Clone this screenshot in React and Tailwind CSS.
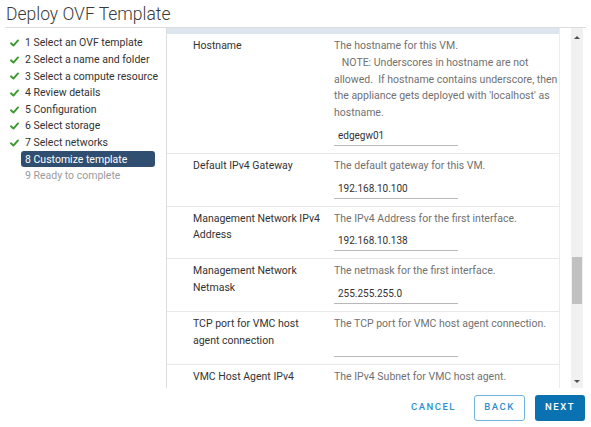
// Deploy OVF Template wizard — step 8 (Customize template)

const STEPS = [
  { n: 1, label: "Select an OVF template", done: true },
  { n: 2, label: "Select a name and folder", done: true },
  { n: 3, label: "Select a compute resource", done: true },
  { n: 4, label: "Review details", done: true },
  { n: 5, label: "Configuration", done: true },
  { n: 6, label: "Select storage", done: true },
  { n: 7, label: "Select networks", done: true },
  { n: 8, label: "Customize template", active: true },
  { n: 9, label: "Ready to complete", pending: true },
];

const FIELDS = [
  {
    label: "Hostname",
    desc: [
      "The hostname for this VM.",
      "   NOTE: Underscores in hostname are not",
      "allowed.  If hostname contains underscore, then",
      "the appliance gets deployed with 'localhost' as",
      "hostname.",
    ],
    value: "edgegw01",
  },
  {
    label: "Default IPv4 Gateway",
    desc: ["The default gateway for this VM."],
    value: "192.168.10.100",
  },
  {
    label: "Management Network IPv4 Address",
    desc: ["The IPv4 Address for the first interface."],
    value: "192.168.10.138",
  },
  {
    label: "Management Network Netmask",
    desc: ["The netmask for the first interface."],
    value: "255.255.255.0",
  },
  {
    label: "TCP port for VMC host agent connection",
    desc: ["The TCP port for VMC host agent connection."],
    value: "",
  },
  {
    label: "VMC Host Agent IPv4",
    desc: ["The IPv4 Subnet for VMC host agent."],
    value: "",
  },
];

const CheckMark = () => (
  <svg width="9" height="8" viewBox="0 0 9 8" fill="none">
    <path
      d="M1 4.3 L3.4 6.6 L8 1.4"
      stroke="#3b9a2e"
      strokeWidth="1.9"
      strokeLinecap="round"
      strokeLinejoin="round"
    />
  </svg>
);

const StepNav = () => (
  <nav className="w-[162px] shrink-0 border-r border-[#dcdcdc] pt-[7px] pl-[5px] pr-[11px]">
    {STEPS.map((s) => (
      <div key={s.n} className="flex h-[16.6px] items-center whitespace-nowrap">
        <span className="flex w-[15px] shrink-0 items-center">
          {s.done && <CheckMark />}
        </span>
        <span
          className={
            s.active
              ? "-ml-[4px] flex h-[16px] flex-1 items-center rounded-[3px] bg-[#2f4e70] pl-[4px] text-white"
              : s.pending
              ? "text-[#9b9b9b]"
              : "text-[#333]"
          }
        >
          {s.n} {s.label}
        </span>
      </div>
    ))}
  </nav>
);

const FieldRow = ({ field }) => (
  <div className="flex border-b border-[#e8e8e8] pl-[26px] pt-[4px] pb-[7px]">
    <div className="w-[141px] shrink-0 pr-[12px] leading-[16.75px] text-[#333]">
      {field.label}
    </div>
    <div className="flex-1">
      {field.desc.map((line, i) => (
        <div key={i} className="whitespace-pre leading-[16.75px] text-[#717171]">
          {line}
        </div>
      ))}
      <div className="mt-[4px] flex h-[20px] w-[124px] items-center border-b border-[#b8b8b8] pl-[4px] text-[10px] text-[#333]">
        {field.value}
      </div>
    </div>
  </div>
);

const Scrollbar = () => (
  <div className="relative ml-[11px] w-[12px] shrink-0 bg-[#f1f1f1]">
    <div className="absolute left-[3px] top-[8px] h-0 w-0 border-x-[3px] border-b-[3px] border-x-transparent border-b-[#505050]" />
    <div className="absolute left-[1px] top-[229px] h-[47px] w-[10px] bg-[#c1c1c1]" />
    <div className="absolute left-[3px] bottom-[5px] h-0 w-0 border-x-[3px] border-t-[3px] border-x-transparent border-t-[#505050]" />
  </div>
);

export default function App() {
  return (
    <div className="flex h-[427px] w-[591px] flex-col overflow-hidden bg-white font-['Roboto',sans-serif] text-[10.5px]">
      <h1 className="h-[27px] pl-[6px] pt-[3px] text-[17.5px] font-light leading-[22px] text-[#3a3a3a]">
        Deploy OVF Template
      </h1>

      <div className="mx-[5px] flex h-[361px] border-t border-[#dcdcdc]">
        <StepNav />

        <div className="flex flex-1 pr-[2px]">
          <div className="w-[393px] shrink-0 overflow-hidden border-r border-[#ececec]">
            <div className="h-[6px] bg-[#dde6ee]" />
            {FIELDS.map((f) => (
              <FieldRow key={f.label} field={f} />
            ))}
          </div>
          <Scrollbar />
        </div>
      </div>

      <div className="flex flex-1 items-center justify-end gap-[10px] pr-[6px]">
        <button className="px-[8px] text-[9.5px] font-medium tracking-[1.5px] text-[#2f8fcf]">
          CANCEL
        </button>
        <button className="h-[26px] w-[51px] rounded-[3px] border border-[#6fb3df] text-[9.5px] font-medium tracking-[1.5px] text-[#2f8fcf]">
          BACK
        </button>
        <button className="h-[26px] w-[50px] rounded-[3px] bg-[#0a72b0] text-[9.5px] font-medium tracking-[1.5px] text-white">
          NEXT
        </button>
      </div>
    </div>
  );
}
